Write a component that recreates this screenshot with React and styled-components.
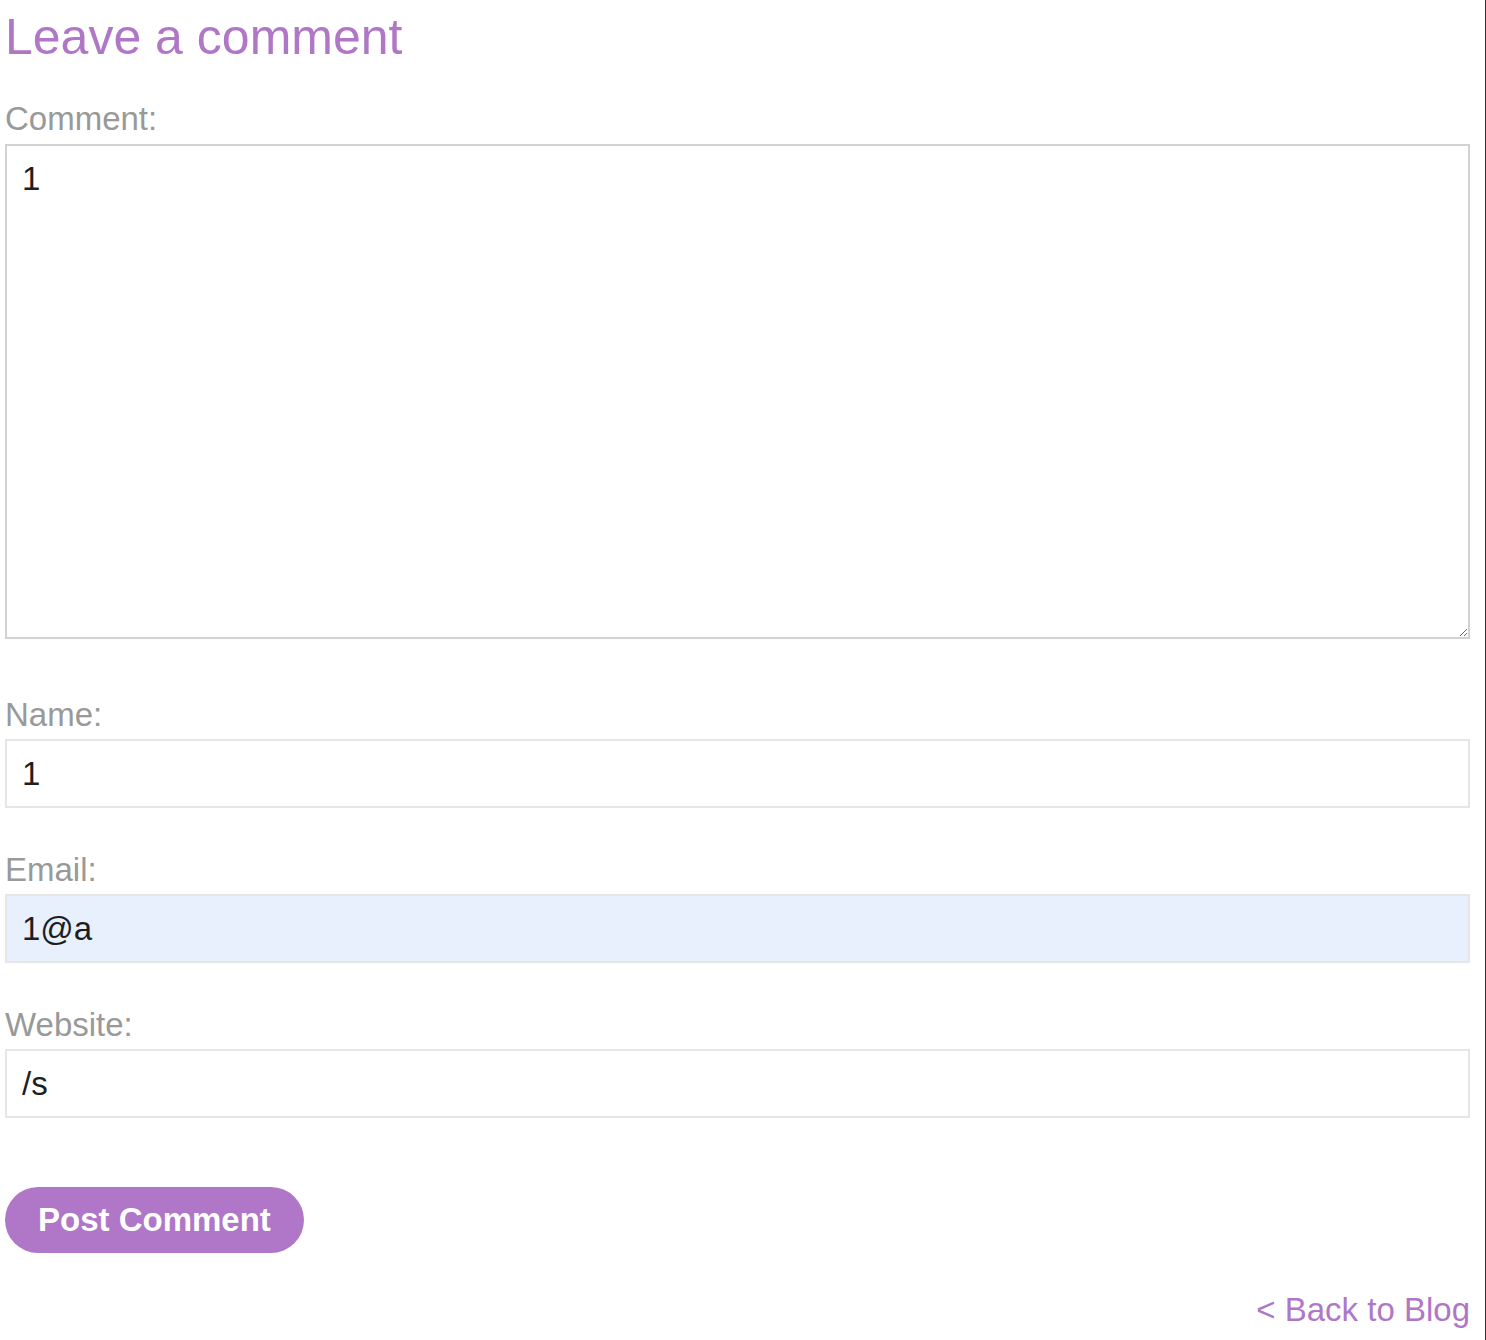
import React from "react";
import styled, { createGlobalStyle } from "styled-components";

const GlobalStyle = createGlobalStyle`
  html, body {
    margin: 0;
    padding: 0;
    background: #fff;
  }
  body {
    font-family: "Liberation Sans", Arial, sans-serif;
  }
`;

const Page = styled.div`
  box-sizing: border-box;
  min-height: 100vh;
  border-right: 1px solid #2e2e2e;
  padding: 9px 15px 12px 5px;
`;

const Form = styled.form`
  display: flex;
  flex-direction: column;
`;

const Heading = styled.h2`
  margin: 0 0 34px;
  font-size: 50px;
  line-height: 57px;
  font-weight: 400;
  color: #b077c7;
`;

const Label = styled.label`
  font-size: 33px;
  line-height: 38px;
  color: #999;
  margin-bottom: ${(p) => p.$gap ?? 5}px;
`;

const fieldBase = `
  box-sizing: border-box;
  width: 100%;
  margin: 0;
  font-family: "Liberation Sans", Arial, sans-serif;
  font-size: 33px;
  color: #1e1e1e;
  outline: none;
`;

const TextArea = styled.textarea`
  ${fieldBase}
  display: block;
  height: 495px;
  padding: 14px 15px;
  line-height: 38px;
  border: 2px solid #d2d2d2;
  resize: vertical;
  margin-bottom: 57px;
`;

const Input = styled.input`
  ${fieldBase}
  display: block;
  height: 69px;
  padding: 0 15px;
  border: 2px solid #e6e6e6;
  background: ${(p) => (p.$filled ? "#e8f0fe" : "#fff")};
  margin-bottom: ${(p) => p.$after ?? 43}px;
`;

const Submit = styled.button`
  align-self: flex-start;
  height: 66px;
  padding: 0 33px;
  border: none;
  border-radius: 33px;
  background: #b076c7;
  color: #fff;
  font-family: "Liberation Sans", Arial, sans-serif;
  font-size: 33px;
  font-weight: 700;
  cursor: pointer;
  margin-bottom: 38px;
`;

const BackLink = styled.a`
  align-self: flex-end;
  font-size: 33px;
  line-height: 38px;
  color: #b077c7;
  text-decoration: none;
`;

export default function App() {
  return (
    <>
      <GlobalStyle />
      <Page>
        <Form onSubmit={(e) => e.preventDefault()}>
          <Heading>Leave a comment</Heading>
          <Label htmlFor="comment" $gap={6}>Comment:</Label>
          <TextArea id="comment" defaultValue="1" />
          <Label htmlFor="name">Name:</Label>
          <Input id="name" type="text" defaultValue="1" />
          <Label htmlFor="email">Email:</Label>
          <Input id="email" type="text" defaultValue="1@a" $filled />
          <Label htmlFor="website">Website:</Label>
          <Input id="website" type="text" defaultValue="/s" $after={69} />
          <Submit type="submit">Post Comment</Submit>
          <BackLink href="#">&lt; Back to Blog</BackLink>
        </Form>
      </Page>
    </>
  );
}
